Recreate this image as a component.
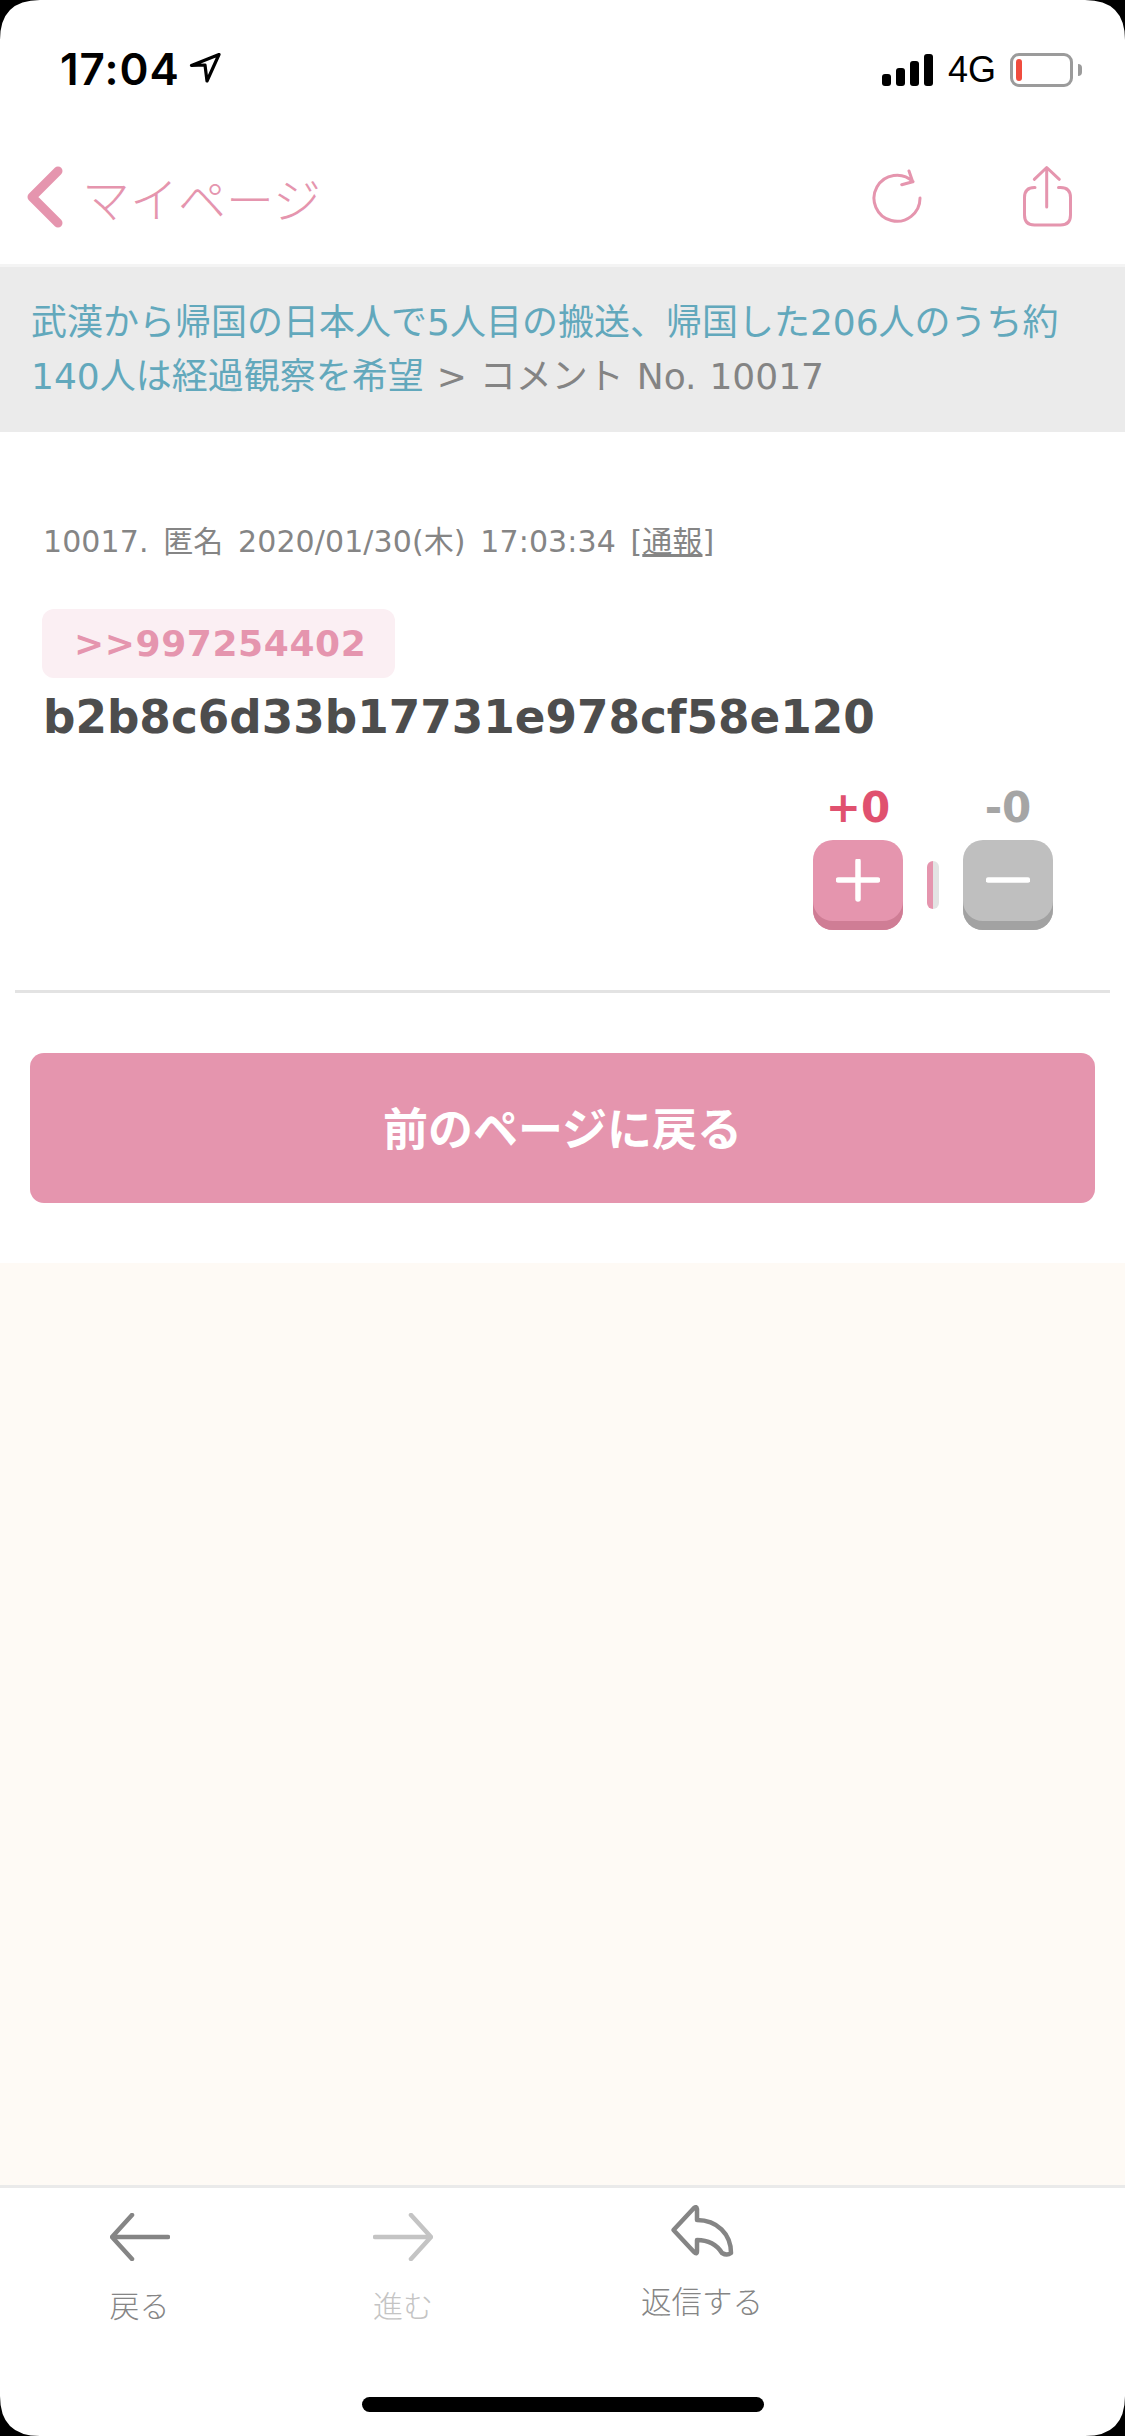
<div class="screen">
  <header class="status">
    <div class="time"><span>17:04</span>
      <svg class="loc" width="32" height="32" viewBox="0 0 32 32"><path d="M30 2.5 L2.5 13.5 L16 13 L18 29 Z" fill="none" stroke="#000" stroke-width="3.2" stroke-linejoin="round"/></svg>
    </div>
    <div class="right">
      <div class="bars"><i class="b1"></i><i class="b2"></i><i class="b3"></i><i class="b4"></i></div>
      <span class="net">4G</span>
      <div class="batt"><div class="batt-body"><i></i></div><div class="batt-cap"></div></div>
    </div>
  </header>

  <nav class="nav">
    <div class="back">
      <svg width="38" height="66" viewBox="0 0 38 66"><path d="M32 7 L6 33 L32 59" fill="none" stroke="#e595ae" stroke-width="9" stroke-linecap="round" stroke-linejoin="round"/></svg>
      <span>マイページ</span>
    </div>
    <div class="nav-icons">
      <svg width="50" height="58" viewBox="0 0 50 58"><path d="M48 30 A23 23 0 1 1 41 13.7 M37 3 L40.7 13.7 L29.7 16.7" fill="none" stroke="#e595ae" stroke-width="3" stroke-linecap="round" stroke-linejoin="round"/></svg>
      <svg width="52" height="64" viewBox="0 0 52 64"><path d="M14 22.5 H13.5 Q3.5 22.5 3.5 32.5 V50 Q3.5 60 13.5 60 H39.5 Q49.5 60 49.5 50 V32.5 Q49.5 22.5 39.5 22.5 H37.5" fill="none" stroke="#e595ae" stroke-width="3" stroke-linecap="round"/><path d="M25.7 3 V42 M13.3 14.3 L25.7 2.5 L38.3 14.3" fill="none" stroke="#e595ae" stroke-width="3" stroke-linecap="round" stroke-linejoin="round"/></svg>
    </div>
  </nav>

  <div class="crumb"><a>武漢から帰国の日本人で5人目の搬送、帰国した206人のうち約</a><br /><a>140人は経過観察を希望</a><span>{' > コメント No. 10017'}</span></div>

  <main class="card">
    <p class="meta">10017. 匿名 2020/01/30(木) 17:03:34 [<u>通報</u>]</p>
    <div class="chip">&gt;&gt;997254402</div>
    <p class="body">b2b8c6d33b17731e978cf58e120</p>
    <div class="votes">
      <div class="vote"><b class="plus">+0</b>
        <button class="vbtn pink" aria-label="plus"><svg width="44" height="44" viewBox="0 0 44 44"><path d="M22 2 V40 M2.5 21 H41.5" stroke="#fff" stroke-width="5.5" stroke-linecap="round"/></svg></button></div>
      <div class="sep"></div>
      <div class="vote"><b class="minus">-0</b>
        <button class="vbtn gray" aria-label="minus"><svg width="44" height="44" viewBox="0 0 44 44"><path d="M2.5 21 H41.5" stroke="#fff" stroke-width="5.5" stroke-linecap="round"/></svg></button></div>
    </div>
    <hr />
    <button class="return">前のページに戻る</button>
  </main>

  <div class="fill"></div>

  <footer class="tabs">
    <div class="tab t1">
      <svg width="60" height="48" viewBox="0 0 60 48"><path d="M22 2 L2 24 L22 46 M3 24 H58" fill="none" stroke="#858585" stroke-width="4.5" stroke-linecap="round" stroke-linejoin="round"/></svg>
      <span>戻る</span>
    </div>
    <div class="tab t2">
      <svg width="60" height="48" viewBox="0 0 60 48"><path d="M38 2 L58 24 L38 46 M2 24 H57" fill="none" stroke="#c4c4c4" stroke-width="4.5" stroke-linecap="round" stroke-linejoin="round"/></svg>
      <span>進む</span>
    </div>
    <div class="tab t3">
      <svg width="64" height="56" viewBox="0 0 64 56"><path d="M27 17 V6 Q26.5 3 24 5 L3.5 27 L24 49 Q27 52 27 48 V37 C39 37 47 42 52 50 Q57 53 61 50 C61 31 47 17 27 17 Z" fill="none" stroke="#858585" stroke-width="4.5" stroke-linejoin="round"/></svg>
      <span>返信する</span>
    </div>
  </footer>
  <div class="home-wrap"><div class="home"></div></div>

  <svg class="corner tl" width="40" height="40" viewBox="0 0 40 40"><path d="M0 0 H40 Q0 0 0 40 Z" fill="#000"/></svg>
  <svg class="corner tr" width="40" height="40" viewBox="0 0 40 40"><path d="M40 0 H0 Q40 0 40 40 Z" fill="#000"/></svg>
  <svg class="corner bl" width="40" height="40" viewBox="0 0 40 40"><path d="M0 40 H40 Q0 40 0 0 Z" fill="#000"/></svg>
  <svg class="corner br" width="40" height="40" viewBox="0 0 40 40"><path d="M40 40 H0 Q40 40 40 0 Z" fill="#000"/></svg>
</div>

<style>
  :global(body) { margin: 0; background: #fff; }
  .screen {
    position: relative; width: 1125px; height: 2436px; display: flex; flex-direction: column;
    background: #fff; overflow: hidden;
    font-family: "DejaVu Sans", "Noto Sans CJK JP", sans-serif;
  }
  .status { height: 100px; box-sizing: border-box; padding: 45px 43px 0 60px; display: flex; justify-content: space-between; align-items: flex-start; flex: none; }
  .time { display: flex; align-items: center; gap: 9px; font: 600 44px/48px Inter, "Liberation Sans", sans-serif; color: #000; letter-spacing: 1px; }
  .loc { margin-top: -2px; }
  .right { display: flex; align-items: center; margin-top: 7px; }
  .bars { display: flex; align-items: flex-end; gap: 5px; height: 32px; margin-right: 15px; }
  .bars i { width: 9px; background: #000; border-radius: 3px; display: block; }
  .b1 { height: 12px; } .b2 { height: 18px; } .b3 { height: 25px; } .b4 { height: 32px; }
  .net { font: 400 36px/36px "Liberation Sans", sans-serif; color: #000; margin-right: 14px; }
  .batt { display: flex; align-items: center; }
  .batt-body { width: 63px; height: 34px; border: 3px solid #9b9b9b; border-radius: 9px; padding: 3px; box-sizing: border-box; display: flex; }
  .batt-body i { width: 6px; background: #f04c3e; border-radius: 3px; display: block; }
  .batt-cap { width: 4px; height: 12px; background: #9b9b9b; border-radius: 0 4px 4px 0; margin-left: 5px; }

  .nav { height: 164px; flex: none; box-sizing: border-box; padding: 30px 52px 0 26px; display: flex; align-items: center; justify-content: space-between; }
  .back { display: flex; align-items: center; gap: 18px; color: #e595ae; font: 300 48px/60px "Noto Sans CJK JP", sans-serif; }
  .nav-icons { display: flex; align-items: center; gap: 99px; }

  .crumb {
    flex: none; box-sizing: border-box; height: 168px; border-top: 3px solid #f4f4f4; background: #ebebeb;
    padding: 29px 20px 0 31px; font: 400 36px/54px "DejaVu Sans", "Noto Sans CJK JP", sans-serif; color: #848484; word-spacing: 1.5px;
  }
  .crumb a { color: #62a8bc; }

  .card { flex: none; height: 831px; box-sizing: border-box; padding: 88px 15px 0; display: flex; flex-direction: column; background: #fff; }
  .meta { margin: 0 0 0 28px; font: 400 30px/44px "DejaVu Sans", "Noto Sans CJK JP", sans-serif; color: #858585; word-spacing: 5px; letter-spacing: 0.1px; }
  .chip { margin: 45px 0 0 27px; align-self: flex-start; height: 69px; width: 353px; box-sizing: border-box; padding-left: 32px; background: #fbeff3; border-radius: 12px;
    font: 700 36px/69px "DejaVu Sans", sans-serif; color: #e595ae; letter-spacing: 0.6px; }
  .body { margin: 11px 0 0 28px; font: 700 45.3px/58px "DejaVu Sans", sans-serif; color: #4d4d4d; }
  .votes { display: flex; justify-content: flex-end; align-items: flex-end; margin-top: 37px; padding-right: 57px; gap: 24px; }
  .vote { display: flex; flex-direction: column; align-items: center; gap: 8px; }
  .vote b { font: 700 42px/48px "DejaVu Sans", sans-serif; }
  .plus { color: #e0516f; } .minus { color: #a5a5a5; }
  .vbtn { width: 90px; height: 90px; border: 0; padding: 0 0 9px; border-radius: 20px; display: flex; align-items: center; justify-content: center; }
  .pink { background: #e595ae; box-shadow: inset 0 -9px 0 #cf7d95; }
  .gray { background: #bfbfbf; box-shadow: inset 0 -9px 0 #a2a2a2; }
  .sep { width: 12px; height: 48px; border-radius: 6px; margin-bottom: 21px; background: linear-gradient(90deg, #e595ae 50%, #e3e3e3 50%); }
  hr { width: 100%; height: 3px; background: #e3e3e3; border: 0; margin: 60px 0 0; flex: none; }
  .return { margin: 60px 15px 0; height: 150px; padding: 0 0 3px; background: #e595ae; color: #fff; border: 0; border-radius: 14px; font: 700 45px/1 "Noto Sans CJK JP", sans-serif; flex: none; }

  .fill { flex: 1; background: #fefaf5; }

  .tabs { flex: none; height: 174px; box-sizing: border-box; border-top: 3px solid #eaeaea; background: #fff; display: grid; grid-template-columns: 279px 248px 350px; align-items: start; }
  .tab { display: flex; flex-direction: column; align-items: center; color: #858585; font: 300 30px/44px "Noto Sans CJK JP", sans-serif; }
  .t1, .t2 { padding-top: 25px; gap: 21px; }
  .t2 { color: #c4c4c4; }
  .t3 { padding-top: 15px; gap: 19px; font-size: 30.5px; }
  .home-wrap { flex: none; height: 77px; background: #fff; display: flex; justify-content: center; padding-top: 38px; box-sizing: border-box; }
  .home { width: 402px; height: 15px; border-radius: 8px; background: #000; }
  .corner { position: absolute; }
  .tl { top: 0; left: 0; } .tr { top: 0; right: 0; } .bl { bottom: 0; left: 0; } .br { bottom: 0; right: 0; }
</style>
